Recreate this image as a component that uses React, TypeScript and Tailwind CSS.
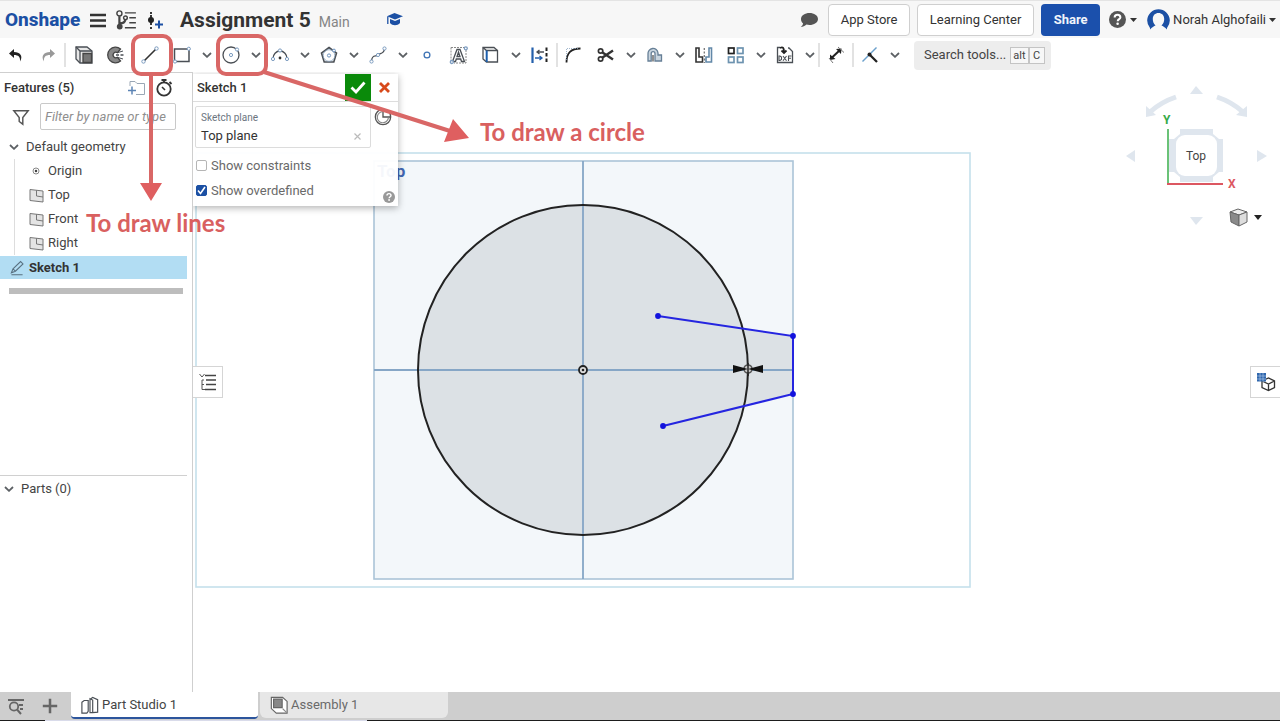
import type { ReactNode } from "react";

interface IconProps {
  children: ReactNode;
  size?: number;
  className?: string;
}

function Icon({ children, size = 20, className = "" }: IconProps) {
  return (
    <svg
      width={size}
      height={size}
      viewBox="0 0 20 20"
      fill="none"
      stroke="#4a4f55"
      strokeWidth="1.3"
      className={`shrink-0 ${className}`}
      aria-hidden="true"
    >
      {children}
    </svg>
  );
}

function Chevron() {
  return (
    <svg width="10" height="6" viewBox="0 0 10 6" fill="none" aria-hidden="true">
      <path d="M1 1L5 4.8L9 1" stroke="#5c6064" strokeWidth="1.8" />
    </svg>
  );
}

function Caret() {
  return (
    <svg width="7" height="4" viewBox="0 0 7 4" aria-hidden="true">
      <path d="M0 0H7L3.5 4Z" fill="#333" />
    </svg>
  );
}

interface ToolProps {
  label: string;
  children: ReactNode;
  menu?: boolean;
}

function Tool({ label, children, menu }: ToolProps) {
  return (
    <>
      <button aria-label={label} className="flex h-8 w-8 shrink-0 items-center justify-center">
        <Icon>{children}</Icon>
      </button>
      {menu && (
        <button
          aria-label={`${label} options`}
          className="flex h-8 w-[17px] shrink-0 items-center justify-center"
        >
          <Chevron />
        </button>
      )}
    </>
  );
}

function Divider() {
  return <div className="h-6 w-0.5 shrink-0 bg-[#e2e2e2]" />;
}

function HelpIcon({ size, color }: { size: number; color: string }) {
  return (
    <svg width={size} height={size} viewBox="0 0 16 16" fill="none" aria-hidden="true">
      <circle cx="8" cy="8" r="8" fill={color} />
      <path
        d="M5.3 6.1C5.3 4.4 6.5 3.5 8 3.5S10.7 4.5 10.7 6C10.7 7.7 8.2 7.7 8.2 9.6"
        stroke="#fff"
        strokeWidth="1.9"
      />
      <circle cx="8.1" cy="12" r="1.2" fill="#fff" />
    </svg>
  );
}

function Header() {
  return (
    <header className="flex h-[38px] shrink-0 items-center border-t border-[#e4e4e4] bg-[#f7f7f7]">
      <a href="#" className="ml-[5px] w-[74px] text-[19px] leading-6 font-extrabold text-[#1c50a4]">
        Onshape
      </a>
      <button aria-label="Menu" className="ml-[9px]">
        <Icon>
          <path d="M2 5H18M2 10.5H18M2 16H18" strokeWidth="2.6" stroke="#333" />
        </Icon>
      </button>
      <button aria-label="Versions and history" className="ml-[7px]">
        <Icon size={22}>
          <g stroke="#444">
            <circle cx="4" cy="4" r="2.3" />
            <circle cx="9.5" cy="8" r="1.7" />
            <path d="M4 6.5V15M4.5 13C8 13 9 12 9.3 10" strokeWidth="2" />
            <circle cx="4.3" cy="16" r="2" fill="#444" />
            <path d="M9 3.5H19M13 8H19M13 12.5H19M9 17H19" strokeWidth="1.3" />
          </g>
        </Icon>
      </button>
      <button aria-label="Create version" className="ml-[7px]">
        <Icon>
          <circle cx="7" cy="10" r="3" fill="#222" stroke="none" />
          <path d="M7 2V4M7 5V15M7 17V19" stroke="#222" strokeWidth="1.8" />
          <path d="M11 14.5H19M15 10.5V18.5" stroke="#1c50a4" strokeWidth="2" />
        </Icon>
      </button>
      <h1 className="ml-4 text-[21px] leading-7 font-bold text-[#333]">Assignment 5</h1>
      <span className="ml-2 pt-1 text-sm text-[#858585]">Main</span>
      <button aria-label="Learning" className="ml-[35px]">
        <Icon>
          <path d="M9.5 3L18 6.3L10 9.5L2 6.3Z" fill="#1c50a4" stroke="none" />
          <path d="M5 9L10 11L15 9V13C12.5 16 7.5 16 5 13Z" fill="#1c50a4" stroke="none" />
          <path d="M2.8 6.5V14" stroke="#1c50a4" />
        </Icon>
      </button>

      <div className="ml-auto flex items-center text-[13px] text-[#333]">
        <button aria-label="Comments" className="mr-2.5">
          <svg width="18" height="16" viewBox="0 0 18 16" aria-hidden="true">
            <path
              d="M9.5 1C14 1 18 3.4 18 7S14 13 9.5 13C8.4 13 7.4 12.9 6.5 12.6C4.8 14.3 2.9 15 0.8 15C2.3 13.8 3 12.7 3 11.3C1.5 10.2 1 8.7 1 7C1 3.4 5 1 9.5 1Z"
              fill="#555"
            />
          </svg>
        </button>
        <button className="h-8 w-[82px] rounded border border-[#cfcfcf] bg-white">App Store</button>
        <button className="ml-[7px] h-8 w-[117px] rounded border border-[#cfcfcf] bg-white">
          Learning Center
        </button>
        <button className="ml-[7px] h-8 w-[59px] rounded bg-[#1b50ac] font-bold text-[#f1f5fb]">
          Share
        </button>
        <button aria-label="Help" className="ml-[9px] flex items-center gap-1">
          <HelpIcon size={17} color="#555" />
          <Caret />
        </button>
        <button className="ml-2.5 flex items-center gap-[3px] pr-1">
          <svg width="23" height="23" viewBox="0 0 23 23" aria-hidden="true">
            <path
              d="M3 20A11.3 11.3 0 1 1 20 20L20 21.5C18 19.5 16 18 14.5 17.5C16.5 15.5 17.2 13.5 17.2 11C17.2 7.2 14.8 5 11.5 5S5.8 7.2 5.8 11C5.8 13.5 6.5 15.5 8.5 17.5C7 18 5 19.5 3 21.5Z"
              fill="#1c50a4"
            />
          </svg>
          <span>Norah Alghofaili</span>
          <Caret />
        </button>
      </div>
    </header>
  );
}

function Toolbar() {
  return (
    <div className="flex h-[34px] shrink-0 items-center overflow-hidden bg-white">
      <Tool label="Undo">
        <path d="M8 4L3 8.5L8 13V10C12.5 10 14.5 12 14 16.5C17.5 11 14 7 8 7Z" fill="#222" stroke="none" />
      </Tool>
      <Tool label="Redo">
        <path d="M12 4L17 8.5L12 13V10C7.5 10 5.5 12 6 16.5C2.5 11 6 7 12 7Z" fill="#999" stroke="none" />
      </Tool>
      <Divider />
      <div className="flex px-0.5">
        <Tool label="Extrude">
          <path d="M2 2H13L18 6V18H6L2 14Z" fill="#e8e8e8" />
          <path d="M2 2L6 6H18M6 6V18" />
          <path d="M9 8.5H17.5V17.5H9Z" fill="#777" stroke="#444" />
        </Tool>
        <Tool label="Revolve">
          <path
            d="M14.5 4A7.8 7.8 0 1 0 14.5 16L11.5 12.3A2.8 2.8 0 1 1 11.5 7.7Z"
            fill="#888"
            stroke="#444"
          />
          <path d="M10 10H19" strokeDasharray="3 1.5" />
          <path d="M12 7.5L17 6M12 12.5L17 14" strokeWidth="1" />
        </Tool>
      </div>
      <Tool label="Line">
        <path d="M4.5 15.5L15.5 4.5" stroke="#333" strokeWidth="1.6" />
        <g stroke="#7c9cc0" fill="#fff" strokeWidth="1">
          <circle cx="3.5" cy="16.5" r="1.7" />
          <circle cx="16.5" cy="3.5" r="1.7" />
        </g>
      </Tool>
      <Tool label="Rectangle" menu>
        <path d="M2.5 4H17V16.5H2.5Z" strokeWidth="1.5" />
        <g stroke="#7c9cc0" fill="#fff" strokeWidth="1">
          <circle cx="3" cy="16.5" r="1.6" />
          <circle cx="16.8" cy="3.8" r="1.6" />
        </g>
      </Tool>
      <Tool label="Circle" menu>
        <circle cx="10" cy="10" r="8" />
        <g stroke="#7c9cc0" fill="#fff" strokeWidth="1">
          <circle cx="10" cy="10" r="1.6" />
          <circle cx="16" cy="4.5" r="1.6" />
        </g>
      </Tool>
      <Tool label="Arc" menu>
        <path d="M3 13.5A7 7.5 0 0 1 17 13.5" />
        <circle cx="10" cy="13" r="1.4" fill="#333" stroke="none" />
        <g stroke="#7c9cc0" fill="#fff" strokeWidth="1">
          <circle cx="3" cy="14" r="1.6" />
          <circle cx="17" cy="14" r="1.6" />
          <circle cx="10" cy="5.5" r="1.6" />
        </g>
      </Tool>
      <Tool label="Polygon" menu>
        <path d="M10 2.5L17.5 8L14.8 17H5.2L2.5 8Z" strokeWidth="1.6" />
        <circle cx="10" cy="10.5" r="5.8" stroke="#8aa5c0" strokeWidth="0.8" />
        <g stroke="#6f94bf" fill="#fff" strokeWidth="1">
          <circle cx="10" cy="10.5" r="1.6" />
          <circle cx="15" cy="5.5" r="1.4" />
        </g>
      </Tool>
      <Tool label="Spline" menu>
        <path d="M3.5 16C4 9 8 12 10 10S16 9 16.5 4" />
        <g stroke="#7c9cc0" fill="#fff" strokeWidth="1">
          <circle cx="3.5" cy="16.5" r="1.6" />
          <circle cx="10" cy="10" r="1.6" />
          <circle cx="16.5" cy="3.5" r="1.6" />
        </g>
      </Tool>
      <Tool label="Point">
        <circle cx="10" cy="10" r="2.9" stroke="#3c72b4" />
      </Tool>
      <Tool label="Text">
        <path d="M2 2.5H15M2 2.5V15M17 5V18H5" stroke="#888" strokeWidth="1" strokeDasharray="2 1" />
        <path d="M3.5 16.5L8 4.5H11L15.5 16.5H12.5L11.7 14H7.3L6.5 16.5ZM8 11.5H11L9.5 7Z" />
        <circle cx="2.8" cy="17" r="1.5" stroke="#7c9cc0" fill="#fff" />
        <circle cx="16.8" cy="3.3" r="1.5" stroke="#7c9cc0" fill="#fff" />
      </Tool>
      <Tool label="Use" menu>
        <path d="M2 2.5H13L16.5 5.5V17H5.5L2 14Z" />
        <path d="M2 2.5L5.5 5.5H16.5" />
        <path d="M5.7 5.5V17" stroke="#1c5fae" strokeWidth="2" />
      </Tool>
      <Tool label="Construction">
        <path d="M2.5 2.5V18" stroke="#2460ac" strokeWidth="2.2" />
        <path d="M16.5 2.5V18" stroke="#222" strokeWidth="2" strokeDasharray="3.500 2" />
        <path d="M14 7H8M9.500 5L7 7L9.500 9" strokeWidth="1.300" />
        <path d="M5 13H11M9.500 11L12 13L9.500 15" stroke="#2460ac" strokeWidth="1.300" />
      </Tool>
      <Divider />
      <Tool label="Fillet">
        <path d="M2.5 17.5C2.5 8 7 3.5 16.5 3.5" stroke="#222" strokeWidth="1.8" />
        <path d="M2.5 15V3.5H14" stroke="#8aa5c0" strokeWidth="0.8" strokeDasharray="1 1" />
      </Tool>
      <Tool label="Trim" menu>
        <g stroke="#333">
          <path d="M6.5 7.5L17 14.5M6.5 12.5L17 5.5" strokeWidth="2.4" />
          <circle cx="4.6" cy="6" r="2.2" strokeWidth="1.7" />
          <circle cx="4.6" cy="14" r="2.2" strokeWidth="1.7" />
        </g>
      </Tool>
      <Tool label="Offset" menu>
        <path
          d="M3 16V9A5 5 0 0 1 13 8V10H16.5V16H10V8.5A1.8 1.8 0 0 0 6.2 8.5V16Z"
          stroke="#667f96"
          fill="#c9d5df"
        />
        <path d="M8 10V16.5" stroke="#555" />
      </Tool>
      <Tool label="Mirror">
        <path d="M2 3H5V12H8.5V17H2Z" stroke="#333" strokeWidth="1.6" />
        <path d="M17.5 3H15V12H12V17H17.5Z" stroke="#6288a8" strokeWidth="1.6" />
        <path d="M10.3 3V18" stroke="#777" strokeDasharray="2 1.5" />
      </Tool>
      <Tool label="Pattern" menu>
        <rect x="2.5" y="3" width="5.5" height="5.5" stroke="#222" strokeWidth="1.7" />
        <g stroke="#6d93b0" strokeWidth="1.7">
          <rect x="11.5" y="3" width="5.5" height="5.5" />
          <rect x="2.5" y="12" width="5.5" height="5.5" />
          <rect x="11.5" y="12" width="5.5" height="5.5" />
        </g>
      </Tool>
      <Tool label="Insert DXF" menu>
        <path d="M5 2.5H2.5V17.5H17.5V6.5L14 3H13" />
        <path d="M5 3C8 1.5 9 3 9 7M6.5 5.5L9 8L11.5 5.5" stroke="#222" strokeWidth="1.8" />
        <path
          d="M4 11V15.5H5L6.5 14.5V12L5 11ZM8 11L11.5 15.8M11.5 11L8 15.8M13.5 16V11H16.5M13.5 13.3H16"
          strokeWidth="1.1"
        />
      </Tool>
      <Divider />
      <Tool label="Dimension">
        <path d="M5.5 13L14 5" strokeWidth="2" stroke="#222" />
        <path d="M4 9.5V15L9.500 14ZM10 4L15.500 3.500L15 9Z" fill="#222" stroke="none" />
        <path d="M3 13L7 18M12 2L18 7.5" stroke="#777" strokeWidth="1" />
      </Tool>
      <Divider />
      <Tool label="Constraints" menu>
        <path d="M2.5 16.5L16.5 2.5" stroke="#6ba0cc" strokeWidth="1.5" />
        <path d="M9.5 9.5L17 17" stroke="#222" strokeWidth="2.3" />
        <circle cx="9.5" cy="9.5" r="2" fill="#222" stroke="none" />
      </Tool>
      <button className="ml-[11px] flex h-[29px] w-[137px] shrink-0 items-center rounded-sm bg-[#ededed] pl-2.5 text-[13px] text-[#444]">
        Search tools...
        <kbd className="ml-1 h-[17px] border border-[#c4c4c4] bg-[#f7f7f7] px-0.5 font-['Roboto',sans-serif] text-[11px] leading-[15px]">
          alt
        </kbd>
        <kbd className="h-[17px] w-4 border border-[#c4c4c4] bg-[#f7f7f7] text-center font-['Roboto',sans-serif] text-[11px] leading-[15px]">
          C
        </kbd>
      </button>
    </div>
  );
}

function PlaneIcon() {
  return (
    <svg width="15" height="15" viewBox="0 0 15 15" fill="none" stroke="#777" aria-hidden="true">
      <path d="M1 1.5L14 3V14L1 12.5Z" fill="#e4e4e4" />
      <path d="M7.5 2.3V8L14 9" />
    </svg>
  );
}

const planes = ["Top", "Front", "Right"];

function Sidebar() {
  return (
    <aside className="flex w-[193px] shrink-0 flex-col border-t border-r border-[#cfcfcf] bg-white text-[13px] text-[#444]">
      <div className="flex h-[30px] items-center pl-1">
        <h2 className="font-medium text-[#333]">Features (5)</h2>
        <button aria-label="Add folder" className="ml-auto">
          <Icon>
            <path d="M4 8V3.5H9L11 5.5H18.5V16.5H10" stroke="#9aa7b5" strokeWidth="1" />
            <path d="M6 8.5V16.5M2 12.5H10" stroke="#5c84b5" strokeWidth="1.5" />
          </Icon>
        </button>
        <button aria-label="Rebuild times" className="mr-[18px] ml-2">
          <Icon>
            <circle cx="10" cy="11" r="6.700" stroke="#333" strokeWidth="1.8" />
            <path d="M7.5 2H12.5M10 2V5M15.5 4L17.5 6" stroke="#333" strokeWidth="1.8" />
            <path d="M8 9L11 12" stroke="#333" strokeWidth="1.6" />
          </Icon>
        </button>
      </div>
      <div className="mr-4 ml-3 flex items-center justify-between">
        <Icon size={18}>
          <path d="M2 3H18L12 10.5V18L8 15V10.5Z" stroke="#555" strokeWidth="1.6" />
        </Icon>
        <input
          aria-label="Filter features"
          placeholder="Filter by name or type"
          className="h-[27px] w-[136px] rounded-xs border border-[#c9c9c9] px-1 text-[13px] italic placeholder:text-[#8f8f8f]"
        />
      </div>
      <ul className="mt-1 leading-6">
        <li>
          <button className="flex h-[25px] items-center gap-[7px] pl-[9px]">
            <Chevron />
            Default geometry
          </button>
          <ul className="ml-3.5 border-l border-[#ddd]">
            <li className="flex h-6 items-center pl-4">
              <Icon size={10}>
                <circle cx="10" cy="10" r="6" stroke="#888" strokeWidth="2" />
                <circle cx="10" cy="10" r="2.5" fill="#444" stroke="none" />
              </Icon>
              <span className="ml-[7px]">Origin</span>
            </li>
            {planes.map((plane) => (
              <li key={plane} className="flex h-6 items-center gap-1 pl-3.5">
                <PlaneIcon />
                {plane}
              </li>
            ))}
          </ul>
        </li>
        <li className="mt-px mr-[5px] flex h-[23px] items-center gap-1 bg-[#b2ddf3] pl-[9px] font-bold text-[#333]">
          <Icon size={16}>
            <path d="M3 16L5 11L14.5 2L17.5 5L8 14ZM5 11L8 14M3 18.5H17" stroke="#587080" />
          </Icon>
          Sketch 1
        </li>
      </ul>
      <div className="mx-[9px] mt-[9px] h-1.5 bg-[#bdbdbd]" />
      <div className="mt-auto mr-[5px] h-[217px] border-t border-[#d0d0d0]">
        <button className="flex h-[25px] items-center gap-[7px] pl-1">
          <Chevron />
          Parts (0)
        </button>
      </div>
    </aside>
  );
}

function Drawing() {
  return (
    <svg
      viewBox="193 72 1087 620"
      preserveAspectRatio="xMinYMin meet"
      className="block h-full w-full"
      role="img"
      aria-label="Sketch of a circle with three lines"
    >
      <rect x="196" y="153" width="774" height="434" fill="none" stroke="#c5e0ec" strokeWidth="1.6" />
      <rect x="374" y="161" width="419" height="418" fill="#f3f7fa" stroke="#abc4d8" strokeWidth="1.6" />
      <text x="377" y="177" fill="#4267b2" className="font-['Roboto',sans-serif] text-[17px] font-bold">
        Top
      </text>
      <circle cx="583" cy="370" r="165" fill="#dce1e5" />
      <path d="M742 329L793 336V394L742 405Q754 367 742 329Z" fill="#dce1e5" />
      <path d="M583 161V579M374 370H793" stroke="#86a6c6" strokeWidth="1.8" />
      <circle cx="583" cy="370" r="165" fill="none" stroke="#222" strokeWidth="2" />
      <path d="M658 316L793 336V394L663 426" fill="none" stroke="#2525e0" strokeWidth="2" />
      <g fill="#1212dd">
        <circle cx="658" cy="316" r="2.9" />
        <circle cx="793" cy="336" r="2.9" />
        <circle cx="793" cy="394" r="2.9" />
        <circle cx="663" cy="426" r="2.9" />
      </g>
      <circle cx="583" cy="370" r="4" fill="#ddd" stroke="#222" strokeWidth="1.8" />
      <circle cx="583" cy="370" r="1.3" fill="#222" />
      <circle cx="748" cy="369" r="4" fill="#ccc" stroke="#555" strokeWidth="1.6" />
      <path d="M733 365L748 369L733 373ZM763 365L748 369L763 373Z" fill="#111" />
      <path d="M748 363V376" stroke="#222" strokeWidth="1.5" />
    </svg>
  );
}

function ViewCube() {
  return (
    <div className="absolute top-2 right-2">
      <svg width="148" height="150" viewBox="1124 80 148 150" aria-label="View cube" role="img">
        <g fill="#dfe6ee">
          <path d="M1190 94L1196 86L1203 94ZM1126 156L1135 150V162ZM1267 156L1257 150V162ZM1190 217H1203L1196 225Z" />
          <path d="M1180 129H1213V134L1219 139H1223V172H1219L1213 177V182H1180V177L1174 172H1169V139H1174L1180 134Z" />
          <path d="M1146 117V106L1156 115ZM1247 117V106L1236 115Z" />
        </g>
        <path d="M1176 97Q1161 102 1150 112M1217 97Q1232 102 1243 112" fill="none" stroke="#dfe6ee" strokeWidth="5" />
        <rect x="1176" y="135" width="41" height="41" rx="9" fill="#fff" />
        <path d="M1168 129V184" stroke="#45b356" strokeWidth="1.6" />
        <path d="M1167 184H1223" stroke="#dc5761" strokeWidth="1.8" />
        <g className="font-['Roboto',sans-serif] text-[12px]">
          <text x="1196" y="160" textAnchor="middle" fill="#444">
            Top
          </text>
          <text x="1163" y="124" fill="#35aa48" className="font-bold">
            Y
          </text>
          <text x="1228" y="188" fill="#dc5761" className="font-bold">
            X
          </text>
        </g>
        <g stroke="#666" strokeWidth="1">
          <path d="M1230 212L1238 209L1247 212L1239 215Z" fill="#eee" />
          <path d="M1230 212L1239 215V226L1231 222Z" fill="#8a8a8a" />
          <path d="M1239 215L1247 212V222L1239 226Z" fill="#ddd" />
        </g>
        <path d="M1254 215H1262L1258 220Z" fill="#222" />
      </svg>
    </div>
  );
}

function SketchDialog() {
  return (
    <section className="absolute top-0.5 left-0 h-[132px] w-[205px] bg-white/95 text-[13px] text-[#6a6a6a] shadow-[0_2px_7px_rgba(0,0,0,0.3)]">
      <div className="flex h-7 items-center border-b border-[#ddd] pl-1">
        <h2 className="font-medium text-[#333]">Sketch 1</h2>
        <button aria-label="Accept" className="ml-auto flex h-[27px] w-[26px] items-center justify-center bg-[#0a8a0a]">
          <svg width="16" height="13" viewBox="0 0 16 13" fill="none" aria-hidden="true">
            <path d="M1.5 6.5L6 11L14.5 1.5" stroke="#fff" strokeWidth="2.8" />
          </svg>
        </button>
        <button aria-label="Cancel" className="mx-2">
          <svg width="11" height="11" viewBox="0 0 11 11" fill="none" aria-hidden="true">
            <path d="M1 1L10 10M10 1L1 10" stroke="#d84a1b" strokeWidth="2.8" />
          </svg>
        </button>
      </div>
      <div className="mt-1 flex justify-between pr-1.5 pl-0.5">
        <div className="h-[42px] w-[176px] rounded-xs border border-[#dcdcdc] px-[5px] pt-1">
          <div className="text-[10px] leading-3.5 text-[#6b7580]">Sketch plane</div>
          <div className="flex items-center justify-between leading-[22px] text-[#333]">
            Top plane
            <button aria-label="Clear plane" className="mr-1">
              <svg width="7" height="7" viewBox="0 0 7 7" aria-hidden="true">
                <path d="M0.5 0.5L6.5 6.5M6.5 0.5L0.5 6.5" stroke="#bbb" strokeWidth="1.2" />
              </svg>
            </button>
          </div>
        </div>
        <button aria-label="Final" className="self-start pt-0.5">
          <Icon size={18}>
            <path d="M18 10H10V2M10 1.5A8.5 8.5 0 1 0 18.5 10C18.5 5 15 1.8 10 1.5" stroke="#555" strokeWidth="1.5" />
            <path d="M10 4A6.2 6.2 0 1 0 16 11" stroke="#888" />
          </Icon>
        </button>
      </div>
      <label className="mt-[7px] flex h-[21px] items-center gap-1 pl-[3px]">
        <input
          type="checkbox"
          className="h-[11px] w-[11px] appearance-none rounded-xs border border-[#b5b5b5] bg-white"
        />
        Show constraints
      </label>
      <label className="mt-1 flex h-[21px] items-center gap-1 pl-[3px]">
        <span className="relative flex">
          <input
            type="checkbox"
            defaultChecked
            className="peer h-[11px] w-[11px] appearance-none rounded-xs border border-[#b5b5b5] checked:border-[#1c50a4] checked:bg-[#1c50a4]"
          />
          <svg
            viewBox="0 0 11 11"
            className="pointer-events-none absolute inset-0 hidden h-[11px] w-[11px] peer-checked:block"
            aria-hidden="true"
          >
            <path d="M2 5.5L4.5 8.5L9 2" fill="none" stroke="#fff" strokeWidth="1.6" />
          </svg>
        </span>
        Show overdefined
      </label>
      <button aria-label="Sketch help" className="absolute right-[3px] bottom-[3px]">
        <HelpIcon size={12} color="#999" />
      </button>
    </section>
  );
}

function Workspace() {
  return (
    <main className="relative min-w-0 flex-1 overflow-hidden bg-white">
      <Drawing />
      <SketchDialog />
      <ViewCube />
      <button
        aria-label="Feature list"
        className="absolute top-[294px] left-0 flex h-8 w-[30px] items-center justify-center border border-l-0 border-[#d5d5d5] bg-white"
      >
        <Icon>
          <path d="M7 3.5H18M8 8H18M8 12.5H18M7 17.500H18" stroke="#444" />
          <path d="M1.5 2L4 5L6.5 2M4 8V17.500H7M4 8H6M4 12.500H6" stroke="#555" strokeWidth="1" />
        </Icon>
      </button>
      <button
        aria-label="Configurations"
        className="absolute top-[294px] right-0 flex h-8 w-[30px] items-center justify-center border border-r-0 border-[#d5d5d5] bg-white"
      >
        <Icon>
          <path d="M6 9L12.5 6L18.5 9V15.5L12.5 18.5L6 15.5ZM6 9L12.5 12L18.5 9M12.5 12V18.5" stroke="#333" fill="#fff" />
          <path d="M1 1H10V9.5H1Z" fill="#2f66ad" stroke="none" />
          <path d="M4 1V9.5M7 1V9.5M1 4H10M1 7H10" stroke="#b8d0eb" strokeWidth="0.6" />
        </Icon>
      </button>
    </main>
  );
}

function TabBar() {
  return (
    <footer className="flex h-[29px] shrink-0 flex-col bg-[#cecece] text-[13px]">
      <nav className="flex flex-1">
        <button aria-label="Search tabs" className="pl-1.5">
          <Icon>
            <path d="M2 4H18M13 9H17M14 13H17" stroke="#666" strokeWidth="1.8" />
            <circle cx="8" cy="10.5" r="4.2" stroke="#666" strokeWidth="1.8" />
            <path d="M11 13.5L15 18" stroke="#666" strokeWidth="2" />
          </Icon>
        </button>
        <button aria-label="Add tab" className="px-[15px]">
          <Icon size={18}>
            <path d="M10 2V18M2 10H18" stroke="#666" strokeWidth="2.8" />
          </Icon>
        </button>
        <button className="-ml-[3px] flex h-[27px] w-[187px] items-center gap-[3px] rounded-b-sm border-b-2 border-[#2c559c] bg-white pl-2.5 text-[#444]">
          <Icon size={18}>
            <path d="M1 7L3.5 5H8V17L6.5 19H1ZM11 3L13 1.5L18.5 4V18L13 18.5H10V3L13 4.5V18" />
          </Icon>
          Part Studio 1
        </button>
        <button className="ml-0.5 flex h-[26px] w-[188px] items-center gap-[3px] rounded-b-md bg-[#e7e7e7] pl-2.5 text-[#6a6a6a]">
          <Icon size={18}>
            <path d="M1.500 1.500H14L19 6V19H7L1.500 14Z" fill="#fff" stroke="#666" />
            <path d="M4 3.5H13.500V13H4Z" fill="#888" stroke="#666" />
            <path d="M14 14L18 18" stroke="#888" />
          </Icon>
          Assembly 1
        </button>
      </nav>
      <div className="flex h-px">
        <div className="w-[45px] bg-[#1d1d1d]" />
        <div className="w-[322px] bg-[#d9dbea]" />
        <div className="flex-1 bg-[#1d1d1d]" />
      </div>
    </footer>
  );
}

function Annotations() {
  return (
    <div className="pointer-events-none absolute inset-0 overflow-hidden font-['Lato',sans-serif] text-[24px] leading-7 font-bold text-[#d9605f]">
      <svg width="480" height="220" className="absolute top-0 left-0" fill="none" aria-hidden="true">
        <g stroke="#d96766" strokeWidth="4">
          <rect x="133" y="36" width="38" height="38" rx="8" />
          <rect x="218" y="36" width="48" height="38" rx="8" />
          <path d="M151 75V186M264 72L450 131" />
        </g>
        <path d="M140 183H162L151 201ZM453 119L469 138L444 142Z" fill="#df5f60" />
      </svg>
      <span className="absolute top-[209px] left-[86px] whitespace-nowrap">To draw lines</span>
      <span className="absolute top-[118px] left-[480px] whitespace-nowrap">To draw a circle</span>
    </div>
  );
}

export default function App() {
  return (
    <div className="relative flex h-screen flex-col overflow-hidden bg-white font-['Roboto',sans-serif]">
      <Header />
      <Toolbar />
      <div className="flex min-h-0 flex-1">
        <Sidebar />
        <Workspace />
      </div>
      <TabBar />
      <Annotations />
    </div>
  );
}
